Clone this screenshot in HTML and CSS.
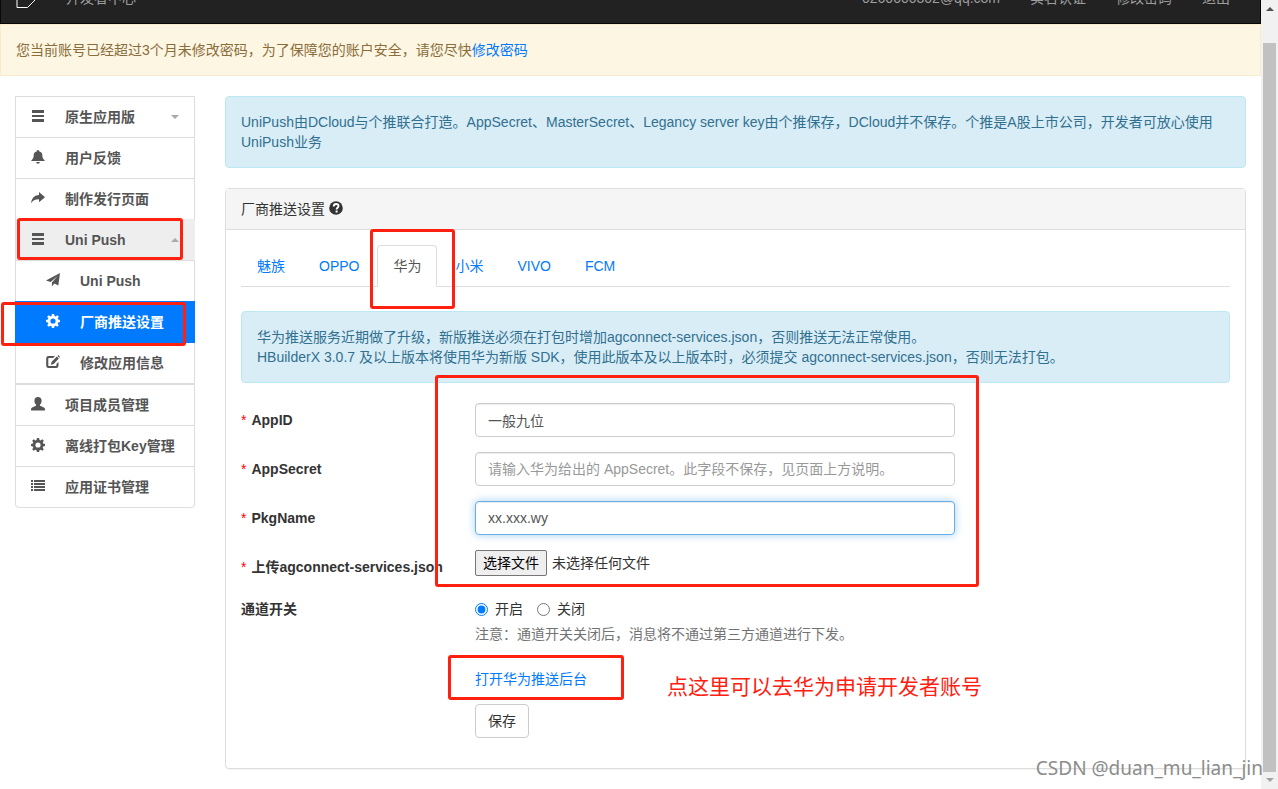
FILE: index.html
```html
<!DOCTYPE html>
<html lang="zh-CN">
<head>
<meta charset="utf-8">
<title>厂商推送设置</title>
<link rel="stylesheet" href="styles.css">
</head>
<body>
<svg class="sprite" aria-hidden="true">
  <symbol id="i-menu" viewBox="0 0 14 14"><path d="M1 1h12v3H1zM1 6h12v2H1zM1 10h12v3H1z"/></symbol>
  <symbol id="i-bell" viewBox="0 0 14 14"><path d="M7 0a1.400 1.400 0 0 1 1.300 1.600C10.400 2 11.300 3.300 11.300 5c0 2.600.6 4 2.300 5.200V11H.4v-.8C2.100 9 2.700 7.600 2.700 5c0-1.700.9-3 3-3.400A1.400 1.400 0 0 1 7 0zM5.200 12h3.600a1.800 1.800 0 0 1-3.600 0z"/></symbol>
  <symbol id="i-share" viewBox="0 0 14 14"><path d="M8 1 14 6.200 8 11.200V8.300C4.800 8.200 2.200 9 .1 12.200.5 7.500 3 4.400 8 4z"/></symbol>
  <symbol id="i-send" viewBox="0 0 14 14"><path d="M14 0 12.300 12.500 8.300 10.600 5.900 13.600V9.500L11.600 3 4.600 9 0 7.400z"/></symbol>
  <symbol id="i-cog" viewBox="0 0 14 14"><path fill-rule="evenodd" d="M5.900 0h2.200l.4 1.900 1.200.5 1.600-1.100 1.500 1.500-1.100 1.600.5 1.200 1.800.4v2.100l-1.800.4-.5 1.200 1.100 1.600-1.500 1.500-1.600-1.100-1.200.5L8.100 14H5.900l-.4-1.800-1.200-.5-1.600 1.100-1.500-1.500 1.100-1.600-.5-1.200L0 8.100V6l1.800-.4.5-1.200-1.100-1.600 1.500-1.500 1.600 1.100 1.200-.5zM7 4.400a2.600 2.600 0 1 0 0 5.200 2.600 2.600 0 0 0 0-5.200z"/></symbol>
  <symbol id="i-edit" viewBox="0 0 14 14"><path d="M9 1H2.500A2.300 2.300 0 0 0 .2 3.300v7.400A2.300 2.300 0 0 0 2.500 13h7.700a2.300 2.300 0 0 0 2.300-2.300V7l-2.100 2.100v1.300c0 .3-.2.500-.5.500H2.800a.5.500 0 0 1-.5-.5V3.600c0-.3.200-.5.500-.5h4.300z"/><path d="m10.900 1.600 1.900 1.900-5.100 5.400-3 .9 1-3zM11.500 1l.9-.9 1.600 1.800-.7.900z"/></symbol>
  <symbol id="i-user" viewBox="0 0 14 14"><path d="M7 0c2.400 0 3.600 1.500 3.600 3.700 0 1.600-.6 3-1.600 3.900-.3.700 0 1.200.6 1.500l3.300 1.500c.7.300 1.100.9 1.100 1.600V13.500H0v-1.300c0-.7.400-1.300 1.100-1.600l3.300-1.500c.6-.3.900-.8.600-1.500-1-.9-1.600-2.300-1.600-3.900C3.400 1.500 4.600 0 7 0z"/></symbol>
  <symbol id="i-list" viewBox="0 0 14 14"><path d="M0 1h2v2H0zM3 1h11v2H3zM0 4h2v2H0zM3 4h11v2H3zM0 7h2v2H0zM3 7h11v2H3zM0 10h2v2H0zM3 10h11v2H3z"/></symbol>
  <symbol id="i-help" viewBox="0 0 14 14"><circle cx="7" cy="7" r="6.800"/><path d="M4.700 5.500C4.700 3.900 5.600 3 7.100 3s2.400.8 2.400 2.100c0 1.700-1.900 1.700-1.900 3.300" fill="none" stroke="#fff" stroke-width="1.900"/><path d="M6.600 9.500h2v2h-2z" fill="#fff"/></symbol>
</svg>
<div class="shell">
  <div class="page">
    <header class="navbar">
      <a class="brand" href="#"><svg class="logo" viewBox="0 0 20 20" aria-hidden="true"><path d="M1 0v19.500h10.500L19 12"/></svg><span>开发者中心</span></a>
      <nav class="account">
        <a href="#">0260000302@qq.com</a>
        <a href="#">实名认证</a>
        <a href="#">修改密码</a>
        <a href="#">退出</a>
      </nav>
    </header>
    <div class="alert alert-warning">您当前账号已经超过3个月未修改密码，为了保障您的账户安全，请您尽快<a href="#">修改密码</a></div>
    <div class="columns">
      <nav class="sidebar">
        <a class="item" href="#"><svg class="icon"><use href="#i-menu"/></svg>原生应用版<span class="caret"></span></a>
        <a class="item" href="#"><svg class="icon"><use href="#i-bell"/></svg>用户反馈</a>
        <a class="item before-open" href="#"><svg class="icon"><use href="#i-share"/></svg>制作发行页面</a>
        <a class="item open" href="#"><svg class="icon"><use href="#i-menu"/></svg>Uni Push<span class="caret up"></span></a>
        <div class="submenu">
          <a class="item" href="#"><svg class="icon"><use href="#i-send"/></svg>Uni Push</a>
          <a class="item active" href="#"><svg class="icon"><use href="#i-cog"/></svg>厂商推送设置</a>
          <a class="item" href="#"><svg class="icon"><use href="#i-edit"/></svg>修改应用信息</a>
        </div>
        <a class="item" href="#"><svg class="icon"><use href="#i-user"/></svg>项目成员管理</a>
        <a class="item" href="#"><svg class="icon"><use href="#i-cog"/></svg>离线打包Key管理</a>
        <a class="item" href="#"><svg class="icon"><use href="#i-list"/></svg>应用证书管理</a>
      </nav>
      <main class="main">
        <div class="alert alert-info">UniPush由DCloud与个推联合打造。AppSecret、MasterSecret、Legancy server key由个推保存，DCloud并不保存。个推是A股上市公司，开发者可放心使用UniPush业务</div>
        <section class="panel">
          <h1 class="panel-heading">厂商推送设置<svg class="icon"><use href="#i-help"/></svg></h1>
          <div class="panel-body">
            <nav class="tabs">
              <a class="tab" href="#">魅族</a>
              <a class="tab" href="#">OPPO</a>
              <a class="tab active" href="#">华为</a>
              <a class="tab" href="#">小米</a>
              <a class="tab" href="#">VIVO</a>
              <a class="tab" href="#">FCM</a>
            </nav>
            <div class="alert alert-info">华为推送服务近期做了升级，新版推送必须在打包时增加agconnect-services.json，否则推送无法正常使用。<br>HBuilderX 3.0.7 及以上版本将使用华为新版 SDK，使用此版本及以上版本时，必须提交 agconnect-services.json，否则无法打包。</div>
            <form class="form">
              <div class="row">
                <label class="label" for="appid"><span class="star">*</span>AppID</label>
                <input class="control" id="appid" type="text" value="一般九位">
              </div>
              <div class="row">
                <label class="label" for="secret"><span class="star">*</span>AppSecret</label>
                <input class="control" id="secret" type="text" placeholder="请输入华为给出的 AppSecret。此字段不保存，见页面上方说明。">
              </div>
              <div class="row">
                <label class="label" for="pkg"><span class="star">*</span>PkgName</label>
                <input class="control focused" id="pkg" type="text" value="xx.xxx.wy">
              </div>
              <div class="row">
                <label class="label" for="file"><span class="star">*</span>上传agconnect-services.json</label>
                <div class="file">
                  <input class="file-input" id="file" type="file">
                  <label class="file-button" for="file">选择文件</label>
                  <span>未选择任何文件</span>
                </div>
              </div>
              <div class="row">
                <div class="label-plain" id="switch">通道开关</div>
                <div class="stack">
                  <div class="radios" role="radiogroup" aria-labelledby="switch">
                    <input class="radio" type="radio" name="channel" id="on" checked><label for="on">开启</label>
                    <input class="radio" type="radio" name="channel" id="off"><label for="off">关闭</label>
                  </div>
                  <p class="help">注意：通道开关关闭后，消息将不通过第三方通道进行下发。</p>
                  <a class="console-link" href="#">打开华为推送后台</a>
                  <button class="save" type="button">保存</button>
                </div>
              </div>
            </form>
          </div>
        </section>
      </main>
    </div>
  </div>
  <div class="scrollbar" aria-hidden="true">
    <span class="arrow arrow-up"></span>
    <span class="thumb"></span>
    <span class="arrow arrow-down"></span>
  </div>
  <div class="mark mark-menu"></div>
  <div class="mark mark-submenu"></div>
  <div class="mark mark-tab"></div>
  <div class="mark mark-form"></div>
  <div class="mark mark-link"></div>
  <div class="note">点这里可以去华为申请开发者账号</div>
  <div class="watermark">CSDN @duan_mu_lian_jin</div>
</div>
</body>
</html>
```
FILE: styles.css
```css
* { box-sizing: border-box; }
body {
  margin: 0;
  font: 14px/20px "Liberation Sans", "Noto Sans CJK SC", sans-serif;
  color: #333;
  background: #fff;
}
a { color: #007aff; text-decoration: none; }
.sprite { display: none; }
.shell { position: relative; display: flex; min-height: 100vh; overflow: hidden; }
.page { flex: 1; min-width: 0; }

.navbar {
  display: flex;
  align-items: flex-end;
  justify-content: space-between;
  height: 24px;
  padding: 0 15px 15px;
  overflow: hidden;
  background: #222;
  border: solid #080808;
  border-width: 0 1px 1px;
}
.navbar a { color: #9d9d9d; }
.brand { display: flex; align-items: flex-end; gap: 30px; }
.logo { width: 20px; height: 20px; fill: none; stroke: #fff; }
.account { display: flex; gap: 30px; padding-right: 15px; }

.alert { padding: 15px; border: 1px solid; border-radius: 4px; }
.alert-warning { color: #8a6d3b; background: #fdf6e3; border-color: #faebcc; border-radius: 0; }
.alert-info { color: #31708f; background: #d9edf7; border-color: #bce8f1; }

.columns { display: flex; gap: 30px; padding: 20px 15px; }
.sidebar {
  flex: 0 0 180px;
  align-self: flex-start;
  border: solid #ddd;
  border-width: 1px 1px 0;
  border-radius: 0 0 4px 4px;
}
.item {
  display: flex;
  align-items: center;
  height: 41px;
  padding: 0 15px;
  border-bottom: 1px solid #ddd;
  color: #555;
  font-weight: bold;
}
.sidebar > .item:last-child { border-radius: 0 0 4px 4px; }
.icon { flex: none; width: 14px; height: 14px; fill: currentColor; }
.item .icon { margin: 0 20px 2px 0; }
.caret { margin-left: auto; border: 4px solid transparent; border-top-color: #aaa; border-bottom-width: 0; }
.caret.up { border-width: 0 4px 4px; border-bottom-color: #aaa; }
.before-open { border-bottom-color: #eee; }
.open { margin-right: -1px; padding-right: 16px; background: #eee; }
.submenu { border-bottom: 1px solid #ddd; }
.submenu .item { padding-left: 30px; }
.submenu .active {
  height: 42px;
  margin: -1px -1px 0;
  padding-left: 31px;
  color: #fff;
  background: #007aff;
  border-color: #007aff;
}

.main { flex: 1; min-width: 0; display: flex; flex-direction: column; gap: 20px; }
.panel { border: 1px solid #ddd; border-radius: 4px; box-shadow: 0 1px 1px rgba(0, 0, 0, .05); }
.panel-heading {
  display: flex;
  align-items: center;
  gap: 4px;
  margin: 0;
  padding: 10px 15px;
  font-size: 14px;
  font-weight: normal;
  background: #f5f5f5;
  border-bottom: 1px solid #ddd;
}
.panel-heading .icon { margin-bottom: 2px; }
.panel-body { padding: 15px 15px 30px; }
.tabs { display: flex; gap: 2px; margin-bottom: 24px; border-bottom: 1px solid #ddd; }
.tab { margin-bottom: -1px; padding: 10px 15px; border: 1px solid transparent; border-radius: 4px 4px 0 0; }
.tab.active { color: #555; background: #fff; border-color: #ddd #ddd #fff; }

.form { display: flex; flex-direction: column; gap: 15px; margin-top: 20px; }
.row { display: grid; grid-template-columns: 234px minmax(0, 480px); min-height: 34px; }
.label { padding-top: 7px; font-weight: bold; white-space: nowrap; }
.label-plain { font-weight: bold; }
.star { margin-right: 5px; color: #f00; font-weight: normal; }
.control {
  width: 100%;
  height: 34px;
  padding: 6px 12px;
  font: inherit;
  color: #555;
  background: #fff;
  border: 1px solid #ccc;
  border-radius: 4px;
  box-shadow: inset 0 1px 1px rgba(0, 0, 0, .075);
  outline: 0;
}
.control::placeholder { color: #999; opacity: 1; }
.focused { border-color: #66afe9; box-shadow: inset 0 1px 1px rgba(0, 0, 0, .075), 0 0 8px rgba(102, 175, 233, .6); }
.file { display: flex; align-items: center; align-self: start; gap: 5px; }
.file-input { position: absolute; width: 1px; height: 1px; opacity: 0; }
.file-button { padding: 2px 7px; color: #000; background: #efefef; border: 1px solid #767676; border-radius: 2px; }
.stack { display: flex; flex-direction: column; align-items: flex-start; }
.radios { display: flex; align-items: center; }
.radio { width: 13px; height: 13px; margin: 0 7px 0 0; accent-color: #007aff; }
.radios label { margin-right: 14px; }
.help { margin: 5px 0 25px; color: #737373; }
.save {
  margin-top: 15px;
  padding: 6px 12px;
  font: inherit;
  color: #333;
  background: #fff;
  border: 1px solid #ccc;
  border-radius: 4px;
}

.scrollbar {
  flex: 0 0 17px;
  display: flex;
  flex-direction: column;
  align-items: center;
  padding: 7px 0;
  background: #f1f1f1;
}
.arrow { border: 4px solid transparent; }
.arrow-up { border-top-width: 0; border-bottom-color: #505050; }
.arrow-down { border-bottom-width: 0; border-top-color: #a3a3a3; }
.thumb { flex: 1; width: 13px; margin: 32px 0 6px; background: #c1c1c1; }

.mark { position: absolute; border: 3px solid #ff2010; border-radius: 3px; pointer-events: none; }
.mark-menu { left: 17px; top: 218px; width: 166px; height: 42px; }
.mark-submenu { left: 1px; top: 302px; width: 185px; height: 44px; }
.mark-tab { left: 370px; top: 229px; width: 85px; height: 80px; }
.mark-form { left: 435px; top: 375px; width: 544px; height: 212px; }
.mark-link { left: 448px; top: 655px; width: 176px; height: 45px; }
.note { position: absolute; left: 667px; top: 672px; font-size: 21px; line-height: 30px; color: #ff2010; }
.watermark {
  position: absolute;
  right: 15px;
  top: 754px;
  font: 19px/28px "Noto Sans", sans-serif;
  color: #8c8c8c;
}
```
